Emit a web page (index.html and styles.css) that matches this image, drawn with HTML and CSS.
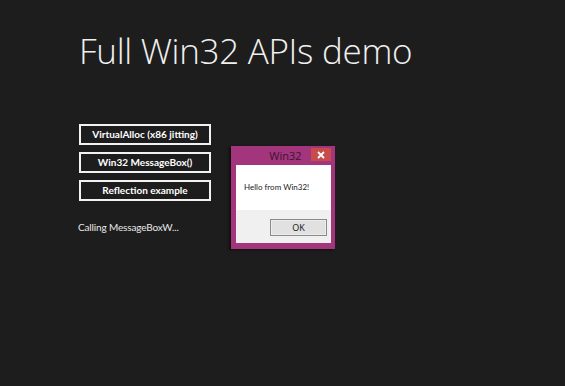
FILE: index.html
```html
<!DOCTYPE html>
<html>
<head>
<meta charset="utf-8">
<link rel="stylesheet" href="styles.css">
</head>
<body>
<main class="app">
  <h1 class="title">Full Win32 APIs demo</h1>
  <div class="actions">
    <button class="action">VirtualAlloc (x86 jitting)</button>
    <button class="action">Win32 MessageBox()</button>
    <button class="action">Reflection example</button>
  </div>
  <p class="status">Calling MessageBoxW...</p>
</main>
<div class="msgbox">
  <div class="msgbox-titlebar">
    <span class="msgbox-title">Win32</span>
    <span class="msgbox-close">
      <svg width="8" height="8" viewBox="0 0 8 8"><path d="M1 1L7 7M7 1L1 7" stroke="#fff" stroke-width="1.8"/></svg>
    </span>
  </div>
  <div class="msgbox-body">
    <div class="msgbox-content">Hello from Win32!</div>
    <div class="msgbox-footer">
      <button class="msgbox-ok">OK</button>
    </div>
  </div>
</div>
</body>
</html>
```
FILE: styles.css
```css
html, body {
  margin: 0;
  padding: 0;
  height: 100%;
}
body {
  background: #1d1d1d;
  font-family: "Lato", "Liberation Sans", sans-serif;
  color: #fff;
  overflow: hidden;
}
.app {
  padding: 33px 0 0 79px;
}
.title {
  margin: 0;
  font-family: "Open Sans", "Liberation Sans", sans-serif;
  font-size: 35px;
  letter-spacing: -0.3px;
  line-height: 36px;
  font-weight: 300;
  color: #f0f0f0;
}
.actions {
  margin-top: 55px;
  display: flex;
  flex-direction: column;
  gap: 7px;
}
.action {
  width: 132px;
  height: 21px;
  box-sizing: border-box;
  border: 2px solid #f2f2f2;
  background: transparent;
  color: #fff;
  font-family: "Lato", "Liberation Sans", sans-serif;
  font-size: 10px;
  font-weight: 700;
  padding: 0;
  line-height: 15px;
}
.status {
  margin: 18px 0 0 -1px;
  font-family: "Lato", "Liberation Sans", sans-serif;
  font-size: 10px;
  letter-spacing: -0.15px;
  line-height: 16px;
  color: #e8e8e8;
}
.msgbox {
  position: absolute;
  left: 231px;
  top: 146px;
  width: 104px;
  height: 103px;
  box-sizing: border-box;
  background: #a2357c;
  padding: 0 4px 6px 5px;
  display: flex;
  flex-direction: column;
  box-shadow: -2px 1px 2px rgba(0,0,0,0.5);
}
.msgbox-titlebar {
  height: 19px;
  display: flex;
  align-items: flex-start;
  position: relative;
}
.msgbox-title {
  flex: 1;
  text-align: center;
  font-family: "Open Sans", "Liberation Sans", sans-serif;
  font-size: 11px;
  line-height: 19px;
  color: #3b1430;
  padding-left: 4px;
}
.msgbox-close {
  position: absolute;
  right: 0px;
  top: 2px;
  width: 20px;
  height: 13px;
  background: #c84b4b;
  display: flex;
  align-items: center;
  justify-content: center;
}
.msgbox-body {
  flex: 1;
  display: flex;
  flex-direction: column;
  background: #f0f0f0;
}
.msgbox-content {
  background: #fff;
  height: 45px;
  box-sizing: border-box;
  padding: 16px 0 0 8px;
  font-family: "Lato", "Liberation Sans", sans-serif;
  font-size: 8px;
  line-height: 12px;
  color: #1a1a1a;
}
.msgbox-footer {
  flex: 1;
  display: flex;
  justify-content: flex-end;
  align-items: flex-start;
  padding: 9px 4px 0 0;
}
.msgbox-ok {
  width: 57px;
  height: 17px;
  box-sizing: border-box;
  background: #e1e1e1;
  border: 1px solid #8a8a8a;
  box-shadow: inset 0 0 0 1px #ececec;
  font-family: "Open Sans", "Liberation Sans", sans-serif;
  font-size: 9px;
  color: #111;
  padding: 0;
  line-height: 14px;
}
```
